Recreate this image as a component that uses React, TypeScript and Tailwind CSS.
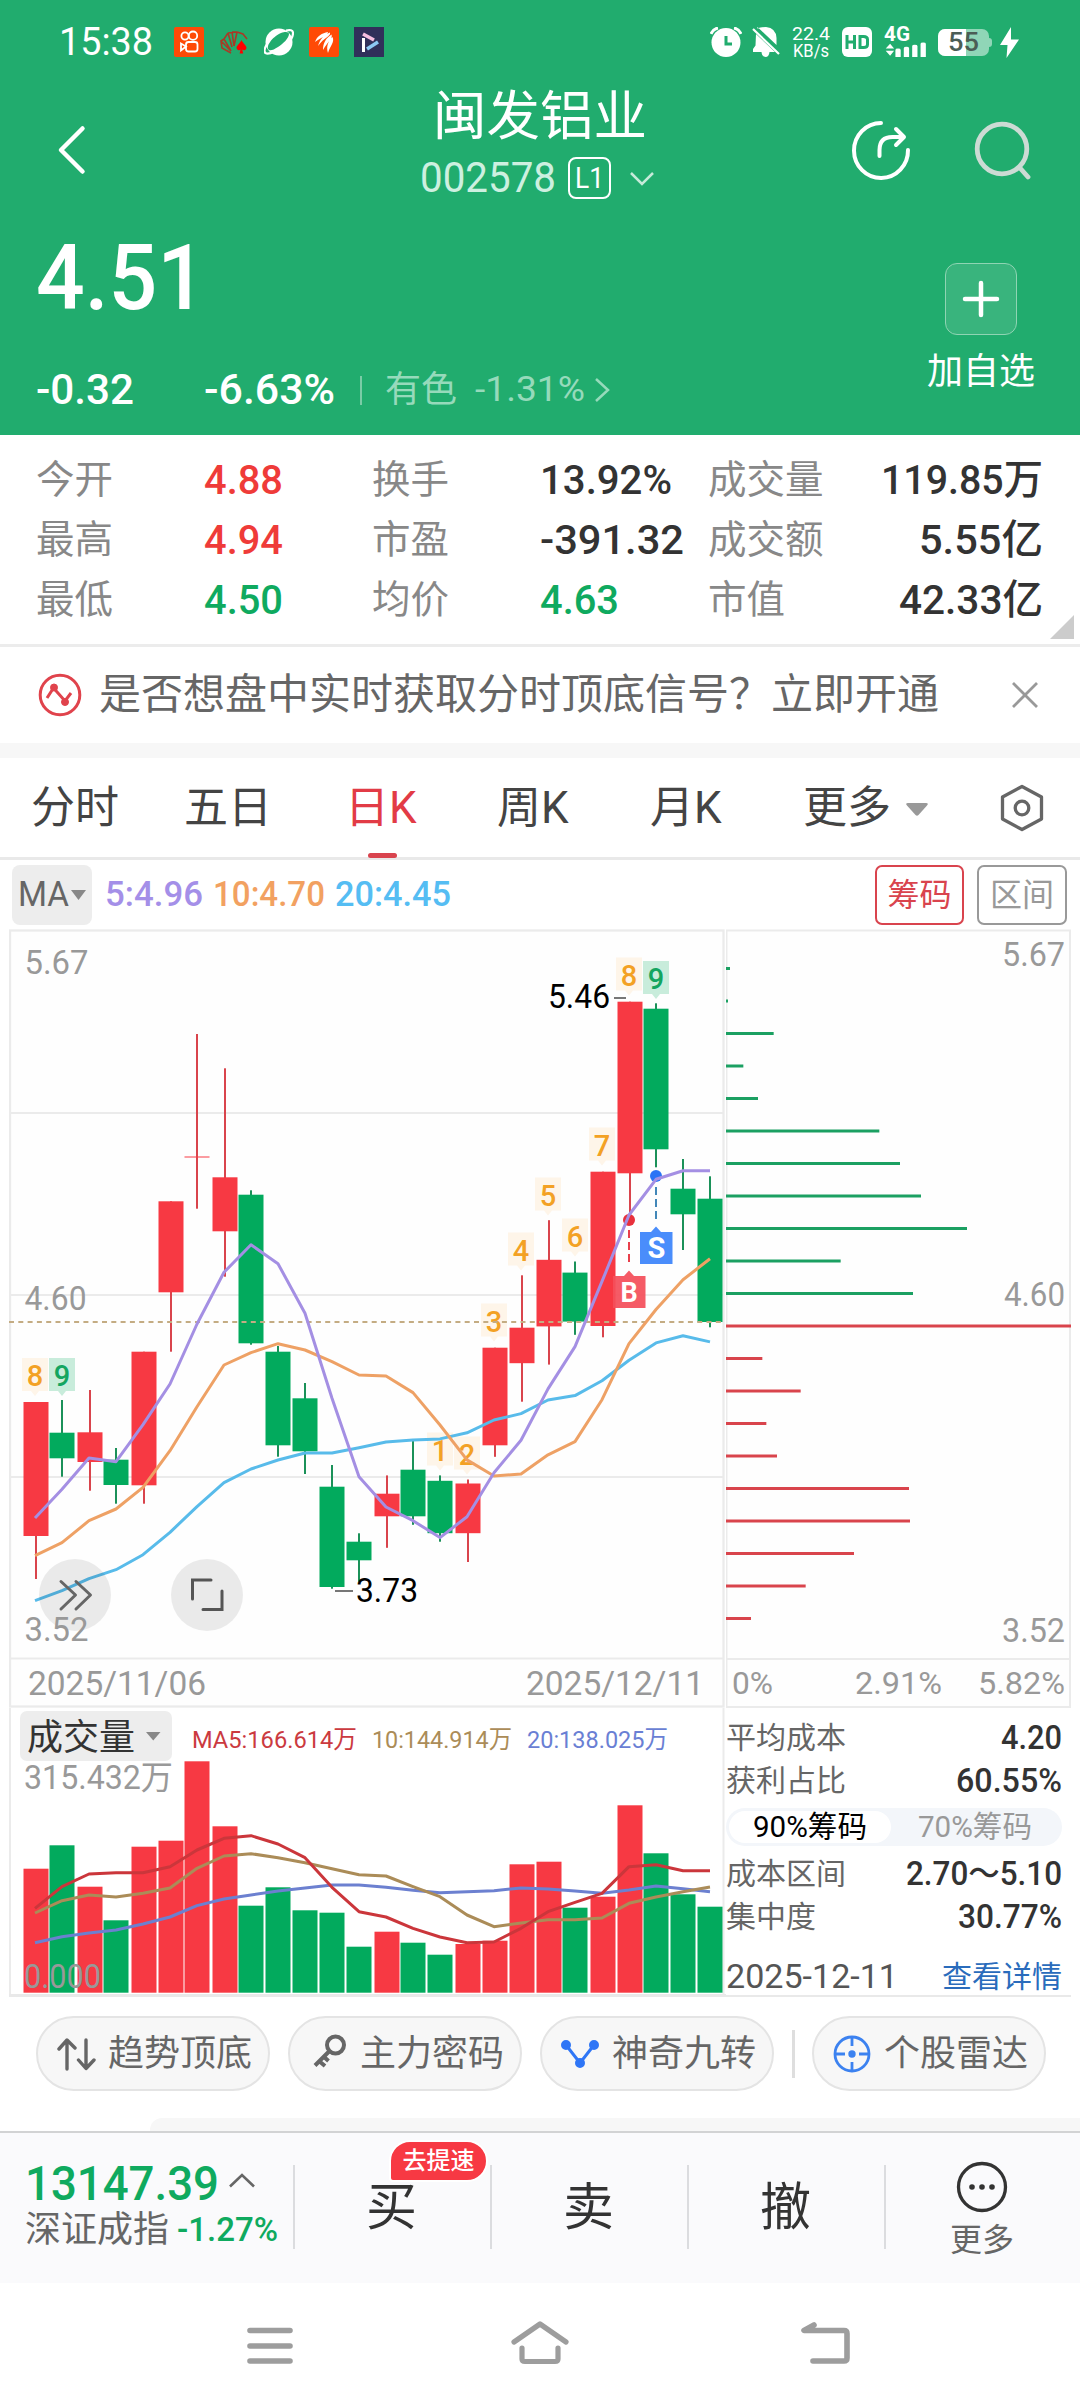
import React, { useLayoutEffect, useRef } from "react";

const RED = "#f73943";
const GREEN = "#02aa5d";

/* Text squeezed or stretched horizontally to an exact width. */
function Fit({ w, className = "", children }: { w: number; className?: string; children: React.ReactNode }) {
  const ref = useRef<HTMLSpanElement>(null);
  useLayoutEffect(() => {
    const el = ref.current;
    if (!el) return;
    el.style.transform = "none";
    el.style.transform = `scaleX(${w / el.getBoundingClientRect().width})`;
  }, [w]);
  return (
    <span className={`inline-flex shrink-0 whitespace-nowrap ${className}`} style={{ width: w }}>
      <span ref={ref} className="inline-block origin-left">
        {children}
      </span>
    </span>
  );
}

function StatusBar() {
  return (
    <div className="flex h-[84px] items-center pl-[59px] pr-[61px] text-white">
      <Fit w={94} className="text-[38px] leading-[84px]">15:38</Fit>
      <div className="ml-[21px] flex items-center gap-[15px]">
        <svg width="30" height="30" viewBox="0 0 30 30" fill="none" stroke="#fff" strokeWidth="1.8">
          <rect width="30" height="30" rx="2" fill="#ff4a06" stroke="none" />
          <circle cx="11" cy="9" r="3.6" />
          <circle cx="19" cy="8.700" r="4.200" />
          <rect x="12" y="15" width="11.5" height="9.500" rx="2.5" />
          <path d="M12 19.500L7 16.500v7z" />
        </svg>
        <svg width="30" height="30" viewBox="0 0 30 30" fill="none" stroke="#a83a26" strokeWidth="1.6">
          <path d="M9 6l9-1M9 6l-4 6 7 12M5 12l-3 2 1 7 9 5M2 14l10 10M9 6l4 14M13 5l2 14M18 5l-3 14M18 5l6 2 4 5M13 5l5 0" />
          <path d="M22.500 13c2 4 5 5.500 5 8a2.500 2.500 0 0 1-4.300 1.500l1 4h-3.600l1-4A2.500 2.500 0 0 1 17.500 21c0-2.500 3-4 5-8z" fill="#f00" stroke="none" />
        </svg>
        <svg width="30" height="30" viewBox="0 0 30 30">
          <circle cx="15" cy="15" r="13.500" fill="#fff" />
          <path d="M5 23C1 20 8 10 17 6c5-2 8-1 8 1 0 4-6 10-11 13-4 2.500-7 4-9 3z" fill="#21ac6e" />
          <path d="M22 3.500c4-1 7-.5 7 2.500 0 4-3 8-5 10M3 17c-3 5-3.500 9-.5 9.500 2.500.5 6-1 8-2" fill="none" stroke="#fff" strokeWidth="2.200" />
        </svg>
        <svg width="30" height="30" viewBox="0 0 30 30" fill="#fff">
          <rect width="30" height="30" rx="2" fill="#ff4a06" />
          <path d="M6 15C8 9 13 6 19 5c0 3-6 5-13 10zM9 19c2-7 6-11 12-13.500 1 4-6 5-12 13.500zM14 23c0-7 3-12 8.500-15.500C24 12 19 14 14 23zM19 26c-2-6 0-12 4.500-16C26 15 21 19 19 26z" />
        </svg>
        <svg width="30" height="30" viewBox="0 0 30 30" fill="none">
          <rect width="30" height="30" fill="#30305a" />
          <path d="M9.500 11v14" stroke="#fff" strokeWidth="3" />
          <path d="M9 7l11 6" stroke="#f6bfe0" strokeWidth="3.500" />
          <path d="M13 22l11-7" stroke="#8cc9f5" strokeWidth="3.500" />
        </svg>
      </div>
      <div className="ml-auto flex items-center">
        <svg width="32" height="30" viewBox="0 0 32 30">
          <circle cx="16" cy="15.500" r="14.500" fill="#fff" />
          <path d="M1 7Q3 2 8 1M31 7Q29 2 24 1" stroke="#fff" strokeWidth="3" fill="none" />
          <path d="M16 9v8h6" stroke="#21ac6e" strokeWidth="3" fill="none" />
        </svg>
        <svg className="ml-[10px]" width="28" height="30" viewBox="0 0 28 30" fill="#fff">
          <path d="M5 1.500Q9 0 14 0q10 1 10.500 11v7L5.500 0zM4 7l19 18h-5.500q-.5 5-4 5t-4-5H1v-3l2.500-3.500z" />
          <path d="M1 2l26 25" stroke="#fff" strokeWidth="2.200" />
        </svg>
        <div className="ml-[12px] flex w-[38px] flex-col items-center text-[18px] leading-[17px]">
          <Fit w={38}>22.4</Fit>
          <Fit w={36}>KB/s</Fit>
        </div>
        <svg className="ml-[12px]" width="30" height="30" viewBox="0 0 30 30" fill="none" stroke="#21ac6e" strokeWidth="3">
          <rect width="30" height="30" rx="6" fill="#fff" stroke="none" />
          <path d="M5 8v14M12.500 8v14M5 15h7.500M18 9.500h3.500q4 0 4 3v5q0 3-4 3H18z" />
        </svg>
        <div className="ml-[11px] flex h-[30px] w-[46px] flex-col justify-between">
          <Fit w={26} className="ml-[1px] text-[20px] font-bold leading-[15px]">4G</Fit>
          <svg width="46" height="17" viewBox="0 0 46 17" fill="#fff">
            <path d="M0 7.500L5 2l4.500 5.500zM0 10l5 5.500L9.500 10z" />
            <path d="M11 9q0-1.500 3-1.500T17 9v8h-6zM20.500 7q0-1.500 3-1.500t3 1.500v10h-6zM30 4.500Q30 3 33 3t3 1.500V17h-6zM39.500 2q0-1.500 3-1.500t3 1.500v15h-6z" />
          </svg>
        </div>
        <div className="relative ml-[9px] flex h-[27px] w-[51px] items-center overflow-hidden rounded-[7px] bg-[#90d6b7]">
          <div className="h-full w-[28px] bg-white" />
          <div className="absolute inset-0 flex items-center justify-center">
            <Fit w={31} className="text-[25px] font-medium leading-[27px] text-[#4b5d55]">55</Fit>
          </div>
        </div>
        <div className="h-[9px] w-[3px] rounded-r bg-[#90d6b7]" />
        <svg className="ml-[8px]" width="19" height="31" viewBox="0 0 19 31" fill="#fff">
          <path d="M11 0L0 18h7.500L6.500 31 19 12.500h-8z" />
        </svg>
      </div>
    </div>
  );
}

function Header() {
  return (
    <header className="h-[435px] bg-[#21ac6e] text-white">
      <StatusBar />
      <div className="flex h-[132px] items-start px-[48px]">
        <svg className="mt-[40px]" width="48" height="52" viewBox="0 0 48 52" fill="none" stroke="#fff" strokeWidth="4.500" strokeLinecap="round" strokeLinejoin="round">
          <path d="M34.500 4.500L13 26l21.500 21.500" />
        </svg>
        <div className="ml-[324px] flex w-[240px] flex-col items-center">
          <h1 className="h-[64px] text-[53.500px] leading-[66px]">闽发铝业</h1>
          <div className="mt-[8px] flex h-[44px] w-[240px] items-center">
            <Fit w={136} className="text-[42px] leading-[44px] text-[#cdf0e0]">002578</Fit>
            <div className="ml-[12px] flex h-[42px] w-[43px] items-center justify-center rounded-[8px] border-2 border-white">
              <Fit w={29} className="text-[29px] leading-[38px]">L1</Fit>
            </div>
            <svg className="ml-[18px]" width="26" height="16" viewBox="0 0 26 16" fill="none" stroke="#c6ead9" strokeWidth="2.500">
              <path d="M2 3l11 11L24 3" />
            </svg>
          </div>
        </div>
        <svg className="ml-[190px] mt-[35px]" width="62" height="62" viewBox="0 0 62 62" fill="none" stroke="#fff" strokeWidth="4" strokeLinecap="round" strokeLinejoin="round">
          <path d="M31 4a27 27.500 0 1 0 27 27" />
          <path d="M29.500 37v-6q0-13 13-13H53M46 10l8 8-8 8" />
        </svg>
        <svg className="ml-[62px] mt-[36px]" width="58" height="60" viewBox="0 0 58 60" fill="none" stroke="#ccdbd4" strokeWidth="4.800" strokeLinecap="round">
          <circle cx="28" cy="29" r="24.800" />
          <path d="M46 48l8 9" />
        </svg>
      </div>
      <div className="flex h-[219px] justify-between pl-[36px] pr-[45px]">
        <div>
          <div className="mt-[13px] h-[98px]">
            <Fit w={170} className="text-[91px] font-medium leading-[98px]">4.51</Fit>
          </div>
          <div className="mt-[40px] flex h-[46px] items-center leading-[46px]">
            <Fit w={98} className="text-[42px] font-medium">-0.32</Fit>
            <Fit w={131} className="ml-[70px] text-[42px] font-medium">-6.63%</Fit>
            <div className="ml-[25px] h-[29px] w-[2px] bg-[#7acca6]" />
            <span className="ml-[23px] text-[36px] text-[#96dabb]">有色</span>
            <Fit w={110} className="ml-[18px] text-[35px] text-[#96dabb]">-1.31%</Fit>
            <svg className="ml-[9px]" width="16" height="26" viewBox="0 0 16 26" fill="none" stroke="#96dabb" strokeWidth="2.500">
              <path d="M2 2l12 11L2 24" />
            </svg>
          </div>
        </div>
        <div className="flex w-[108px] flex-col items-center pt-[47px]">
          <div className="flex size-[72px] items-center justify-center rounded-[12px] border-[1.500px] border-[#8fd4b3] bg-[#39b47d]">
            <svg width="38" height="38" viewBox="0 0 38 38" stroke="#fff" strokeWidth="4.500" strokeLinecap="round">
              <path d="M3 19h32M19 3v32" />
            </svg>
          </div>
          <span className="mt-[13px] whitespace-nowrap text-[36px] leading-[48px]">加自选</span>
        </div>
      </div>
    </header>
  );
}

type Cell = [string, string, number, string];
const quotes: Cell[][] = [
  [["今开", "4.88", 79, "text-[#ef3b39]"], ["换手", "13.92%", 132, "text-[#333]"], ["成交量", "119.85万", 162, "text-[#333]"]],
  [["最高", "4.94", 79, "text-[#ef3b39]"], ["市盈", "-391.32", 144, "text-[#333]"], ["成交额", "5.55亿", 124, "text-[#333]"]],
  [["最低", "4.50", 79, "text-[#0faa5f]"], ["均价", "4.63", 79, "text-[#0faa5f]"], ["市值", "42.33亿", 144, "text-[#333]"]],
];

function Quotes() {
  return (
    <section className="relative flex h-[212px] flex-col border-b-[3px] border-[#ececec] pl-[36px] pr-[37px] pt-[15px]">
      {quotes.map((row, i) => (
        <div key={i} className="flex h-[60px] items-center text-[38.500px] leading-[60px]">
          {row.map(([label, value, w, color], j) => (
            <div key={j} className={j < 2 ? "flex w-[336px]" : "flex flex-1 justify-between"}>
              <span className="w-[168px] shrink-0 text-[#888]">{label}</span>
              <Fit w={w} className={`text-[41px] font-medium ${color}`}>{value}</Fit>
            </div>
          ))}
        </div>
      ))}
      <svg className="absolute bottom-[5px] right-[6px]" width="24" height="24" viewBox="0 0 24 24">
        <path d="M24 0v24H0z" fill="#ccc" />
      </svg>
    </section>
  );
}

function Notice() {
  return (
    <section className="flex h-[96px] items-center pl-[38px] pr-[41px]">
      <svg width="44" height="44" viewBox="0 0 44 44" fill="none" stroke="#e0434c" strokeWidth="3">
        <circle cx="22" cy="22" r="19.800" />
        <path d="M9 25l6.500-10L27 28l6-8" />
        <circle cx="16" cy="14.500" r="3.500" fill="#e0434c" strokeWidth="1" />
        <circle cx="27" cy="29" r="3.500" fill="#e0434c" strokeWidth="1" />
      </svg>
      <span className="ml-[17px] whitespace-nowrap text-[42px] leading-[60px] text-[#666]">是否想盘中实时获取分时顶底信号？立即开通</span>
      <svg className="ml-auto" width="28" height="28" viewBox="0 0 28 28" stroke="#999" strokeWidth="2.800">
        <path d="M2 2l24 24M26 2L2 26" />
      </svg>
    </section>
  );
}

function Tabs() {
  return (
    <nav className="flex h-[102px] items-center border-b-[3px] border-[#e9e9e9] pl-[31px] pr-[36px] text-[44px] leading-[62px] text-[#444]">
      <span className="w-[153px]">分时</span>
      <span className="w-[161px]">五日</span>
      <span className="relative w-[152px] text-[#e23b46]">
        日K
        <span className="absolute left-[23px] top-[76px] h-[5px] w-[29px] rounded-sm bg-[#d9444e]" />
      </span>
      <span className="w-[153px]">周K</span>
      <span className="w-[153px]">月K</span>
      <span>更多</span>
      <svg className="ml-[15px] mt-[4px]" width="22" height="13" viewBox="0 0 22 13" fill="#999">
        <path d="M2 0h18q3 0 1 2.500l-8.500 9.500q-1.500 1.500-3 0L1 2.500Q-1 0 2 0z" />
      </svg>
      <svg className="ml-auto" width="44" height="48" viewBox="0 0 44 48" fill="none" stroke="#666" strokeWidth="3.300" strokeLinejoin="round">
        <path d="M22 2.500l19.500 10.500v22L22 45.500 2.500 35V13z" />
        <circle cx="22" cy="24" r="6.800" />
      </svg>
    </nav>
  );
}

function Indicators() {
  return (
    <div className="flex h-[69px] items-center pl-[12px] pr-[13px] text-[35px] leading-[60px]">
      <div className="flex h-[60px] w-[80px] items-center rounded-[8px] bg-[#ededed] pl-[6px] text-[#666]">
        <Fit w={51}>MA</Fit>
        <svg className="ml-[2px]" width="15" height="10" viewBox="0 0 15 10" fill="#888"><path d="M0 0h15L7.500 10z" /></svg>
      </div>
      <Fit w={98} className="ml-[13px] font-medium text-[#a48fe8]">5:4.96</Fit>
      <Fit w={112} className="ml-[10px] font-medium text-[#f2a161]">10:4.70</Fit>
      <Fit w={116} className="ml-[10px] font-medium text-[#55bdf3]">20:4.45</Fit>
      <div className="ml-auto flex h-[60px] w-[89px] items-center justify-center rounded-[7px] border-[2px] border-[#d9444e] text-[32px] text-[#d9444e]">筹码</div>
      <div className="ml-[13px] flex h-[60px] w-[90px] items-center justify-center rounded-[7px] border-[2px] border-[#999] text-[32px] text-[#999]">区间</div>
    </div>
  );
}

/* centre x, high, body top, body bottom, low, rising, volume bar top */
const candles: [number, number, number, number, number, boolean, number][] = [
  [36, 1402, 1402, 1536, 1579, true, 1868.7],
  [62, 1400, 1432.7, 1458.3, 1476.7, false, 1845.3],
  [90, 1390, 1432.3, 1462, 1490.7, true, 1886.7],
  [116, 1448, 1459.7, 1485, 1503.7, false, 1920.3],
  [144, 1351.7, 1351.7, 1485.3, 1503.7, true, 1846.7],
  [171, 1201.3, 1201.3, 1292.3, 1351.7, true, 1840.7],
  [197, 1034, 1156, 1158, 1208.7, true, 1761.3],
  [225, 1068.3, 1177.3, 1231.3, 1276.7, true, 1826.3],
  [251, 1190.3, 1194.7, 1343.3, 1344.7, false, 1905.7],
  [278, 1346, 1351.7, 1445.3, 1456.7, false, 1887.3],
  [305, 1383, 1398.3, 1451.3, 1474, false, 1910.3],
  [332, 1465, 1486.7, 1587, 1588.7, false, 1912.7],
  [359, 1533.3, 1541.7, 1560.3, 1581.7, false, 1946.7],
  [387, 1475.4, 1493.7, 1516.3, 1547.8, true, 1931.7],
  [413, 1441, 1469.7, 1516.3, 1524.8, false, 1942.7],
  [440, 1475.4, 1480.8, 1533.2, 1541.7, false, 1954.7],
  [468, 1479.5, 1483.5, 1533.2, 1562, true, 1944],
  [495, 1347.7, 1347.7, 1445.3, 1456.8, true, 1940.7],
  [522, 1275.3, 1327.7, 1363.2, 1401.7, true, 1864.3],
  [549, 1220.2, 1259.8, 1326.4, 1364.6, true, 1861.7],
  [575, 1261.5, 1272.6, 1321.6, 1334.8, false, 1907.7],
  [603, 1171.7, 1171.7, 1326, 1337.3, true, 1896.7],
  [630, 1001.7, 1001.7, 1173.3, 1215, true, 1805.3],
  [656, 1003.3, 1008.7, 1149.3, 1167.3, false, 1853.3],
  [683, 1159, 1188.7, 1214.3, 1250, false, 1894.3],
  [710, 1176.3, 1198.7, 1322, 1327.3, false, 1906.7],
];

const ma5 = [1518, 1489.3, 1458, 1461.7, 1424.7, 1384, 1324, 1272.3, 1244.7, 1263.7, 1313.3, 1398.3, 1476.7, 1507, 1520.7, 1537.6, 1516.7, 1472.7, 1440.3, 1388.9, 1346.6, 1281.4, 1215, 1179.3, 1170.7, 1170.7];
const ma10 = [1555.7, 1542.7, 1520.7, 1509, 1487.3, 1450.7, 1406.7, 1365, 1352.7, 1343.7, 1350, 1361.7, 1375, 1376, 1392.6, 1425, 1459.9, 1476, 1474, 1454.8, 1441.6, 1399.7, 1343.6, 1309.5, 1279.7, 1258.8];
const ma20 = [1600.7, 1590.7, 1578.7, 1569.7, 1554.7, 1532.3, 1506.7, 1482.7, 1469, 1460, 1453, 1453, 1447.7, 1442, 1440, 1438.9, 1432.8, 1420, 1413.6, 1400, 1395.6, 1380.8, 1360.2, 1342.9, 1335.8, 1341.9];

const vol5 = [655, 590, 552, 548, 548, 530, 480, 445, 437, 462, 503, 592, 665, 681, 715, 741, 758, 756, 715, 665, 637, 610, 530, 524, 542, 542].map((v) => 1690 + v / 3);
const vol10 = [669, 632, 615, 621, 610, 594, 535, 498, 491, 503, 518, 536, 554, 558, 590, 620, 675, 710, 699, 689, 689, 684, 640, 621, 605, 591].map((v) => 1690 + v / 3);
const vol20 = [758, 740, 729, 720, 702, 681, 647, 627, 615, 603, 594, 585, 585, 592, 601, 608, 605, 602, 594, 597, 603, 610, 600, 588, 596, 605].map((v) => 1690 + v / 3);

const pts = (ys: number[]) => ys.map((y, i) => `${35 + 27 * i},${y}`).join(" ");

/* digit, centre x, box top, green box */
const marks: [string, number, number, boolean][] = [
  ["8", 35, 1358, false],
  ["9", 62, 1358, true],
  ["1", 440, 1432.5, false],
  ["2", 467, 1436.5, false],
  ["3", 494, 1303.5, false],
  ["4", 521, 1232.5, false],
  ["5", 548, 1177.5, false],
  ["6", 575, 1218.5, false],
  ["7", 602, 1127.5, false],
  ["8", 629, 957.5, false],
  ["9", 656, 961, true],
];

function Label({ x, y, w, size = 33, fill = "#999", weight = 500, children }: { x: number; y: number; w: number; size?: number; fill?: string; weight?: number; children: string }) {
  return (
    <text x={x} y={y} textLength={w} lengthAdjust="spacingAndGlyphs" fontSize={size} fontWeight={weight} fill={fill}>
      {children}
    </text>
  );
}

function PriceChart() {
  return (
    <svg className="block" width="717" height="779" viewBox="9 929 717 779" fill="none">
      <rect x="10" y="930.500" width="713.500" height="776" stroke="#ebebeb" strokeWidth="2.300" fill="#fefefe" />
      <path d="M10 1113h713M10 1295h713M10 1477h713M10 1658.500h713" stroke="#ebebeb" strokeWidth="2" />
      <Label x={28} y={1695} w={178} weight={400}>2025/11/06</Label>
      <Label x={526} y={1695} w={178} weight={400}>2025/12/11</Label>
      {candles.map(([x, h, t, b, l, up], i) => (
        <g key={i} fill={up ? RED : GREEN}>
          <rect x={x - 1} y={h} width="2" height={l - h} fill={up ? "#d9444c" : "#1b9159"} />
          <rect x={x - 12.500} y={t} width="25" height={b - t} opacity={b - t < 3 ? 0.5 : 1} />
        </g>
      ))}
      {marks.map(([n, x, y, g], i) => (
        <g key={i}>
          <path d={`M${x - 13} ${y}h26v33h-9l-4 5-4-5h-9z`} fill={g ? "#c8ecdb" : "#fef2e4"} fillOpacity={g ? 1 : 0.8} />
          <text x={x} y={y + 28} fontSize="29" fontWeight="500" textAnchor="middle" fill={g ? "#14a560" : "#f3a124"}>{n}</text>
        </g>
      ))}
      <path d="M9 1322h714" stroke="#c4ac83" strokeWidth="1.800" strokeDasharray="5 4.300" />
      <path d="M630 1230v36" stroke="#e8404c" strokeWidth="2" strokeDasharray="8 4" transform="translate(-1 0)" />
      <path d="M656 1187v36" stroke="#4287b8" strokeWidth="2" strokeDasharray="8 4" />
      <circle cx="629" cy="1220" r="6" fill="#e8303c" />
      <circle cx="656" cy="1176" r="6" fill="#2b73f5" />
      <path d="M613 1276h11l5-5.500 5 5.500h11.500v32H613z" fill="#f44f5a" fillOpacity="0.930" />
      <path d="M640 1232h11l5-5.500 5 5.500h11.500v32H640z" fill="#4a8dfb" />
      <text x="629" y="1302" fontSize="27" fontWeight="700" textAnchor="middle" fill="#fff">B</text>
      <text x="656.500" y="1258" fontSize="29" fontWeight="700" textAnchor="middle" fill="#fff">S</text>
      <g strokeWidth="3" strokeLinejoin="round">
        <polyline points={pts(ma20)} stroke="#58bbea" />
        <polyline points={pts(ma10)} stroke="#eea165" />
        <polyline points={pts(ma5)} stroke="#a48fe3" />
      </g>
      <path d="M614 998h12M335 1591h18" stroke="#777" strokeWidth="2" />
      <Label x={548} y={1008} w={62} fill="#000" weight={450}>5.46</Label>
      <Label x={356} y={1601.500} w={62} fill="#000" weight={450}>3.73</Label>
      <Label x={24.500} y={974} w={64} weight={450}>5.67</Label>
      <Label x={24.500} y={1310} w={62} weight={450}>4.60</Label>
      <circle cx="75" cy="1595" r="36" fill="#000" fillOpacity="0.080" />
      <circle cx="207" cy="1595" r="36" fill="#000" fillOpacity="0.080" />
      <path d="M61 1581.500L75.500 1595 61 1609M76 1581.500L90.500 1595 76 1609" stroke="#666" strokeWidth="3" strokeLinecap="round" strokeLinejoin="round" />
      <path d="M192.500 1599v-19H211M203 1609.500h19V1591" stroke="#555" strokeWidth="3" strokeLinecap="round" />
      <Label x={24.500} y={1640.500} w={64} weight={450}>3.52</Label>
    </svg>
  );
}

function VolumeChart() {
  return (
    <svg className="block" width="717" height="289" viewBox="9 1708 717 289" fill="none">
      <path d="M10 1708v288M723.500 1708v288" stroke="#ebebeb" strokeWidth="2" />
      <path d="M9 1995.500h717" stroke="#e9e9e9" strokeWidth="3" />
      {candles.map(([x, , , , , up, t], i) => (
        <rect key={i} x={x - 12.500} y={t} width="25" height={1992.700 - t} fill={up ? RED : GREEN} />
      ))}
      <g strokeWidth="3" strokeLinejoin="round">
        <polyline points={pts(vol20)} stroke="#6c80d0" />
        <polyline points={pts(vol10)} stroke="#ab8c58" />
        <polyline points={pts(vol5)} stroke="#cb363b" />
      </g>
      <rect x="20" y="1711" width="152" height="50" rx="7" fill="#ededed" />
      <Label x={27} y={1750} w={108} size={36} fill="#333" weight={400}>成交量</Label>
      <path d="M146 1732h14.500l-7.250 8.500z" fill="#888" />
      <Label x={192} y={1748} w={165} size={24.500} fill="#cb3a3f" weight={400}>MA5:166.614万</Label>
      <Label x={372} y={1748} w={140} size={24.500} fill="#ab8c58" weight={400}>10:144.914万</Label>
      <Label x={527} y={1748} w={141} size={24.500} fill="#6a7fd4" weight={400}>20:138.025万</Label>
      <Label x={24} y={1789} w={149} weight={400}>315.432万</Label>
      <Label x={24} y={1988} w={77} weight={450}>0.000</Label>
    </svg>
  );
}

const chips = [12, 6, 143, 52, 96, 460, 522, 585, 723, 344, 561, 1035, 109, 224, 121, 153, 549, 552, 384, 239, 75];

function ChipChart() {
  return (
    <svg className="block" width="345" height="779" viewBox="726 929 345 779" fill="none">
      <rect x="726.500" y="930.500" width="343.500" height="776.500" stroke="#ebebeb" strokeWidth="2" fill="#fefefe" />
      <path d="M726 1659h344" stroke="#ebebeb" strokeWidth="2" />
      {chips.map((w, i) => (
        <rect key={i} x="726" y={967 + 32.500 * i} width={w / 3} height="3" fill={i < 11 ? "#1ba062" : "#d9444c"} />
      ))}
      <Label x={1002} y={966} w={63} weight={450}>5.67</Label>
      <Label x={1004} y={1306} w={61} weight={450}>4.60</Label>
      <Label x={1002} y={1641.500} w={63} weight={450}>3.52</Label>
      <Label x={732} y={1693.500} w={41} size={32} weight={400}>0%</Label>
      <Label x={855} y={1693.500} w={87} size={32} weight={400}>2.91%</Label>
      <Label x={978} y={1693.500} w={87} size={32} weight={400}>5.82%</Label>
    </svg>
  );
}

function StatRow({ label, value, w }: { label: string; value: string; w: number }) {
  return (
    <div className="flex h-[43px] items-center justify-between leading-[43px]">
      <span className="text-[30px] text-[#666]">{label}</span>
      <Fit w={w} className="text-[33px] font-medium text-[#333]">{value}</Fit>
    </div>
  );
}

function ChipStats() {
  return (
    <div className="flex h-[289px] flex-col border-b-2 border-[#e9e9e9] pr-[9px] pt-[8px]">
      <StatRow label="平均成本" value="4.20" w={61} />
      <StatRow label="获利占比" value="60.55%" w={106} />
      <div className="my-[6px] flex h-[38px] shrink-0 items-center rounded-full bg-[#f3f6fa] p-[3px] text-[30px] leading-[32px]">
        <div className="flex h-[32px] w-[162px] items-center justify-center rounded-full bg-white text-black">
          <Fit w={114}>90%筹码</Fit>
        </div>
        <div className="flex flex-1 items-center justify-center text-[#999]">
          <Fit w={114}>70%筹码</Fit>
        </div>
      </div>
      <StatRow label="成本区间" value="2.70～5.10" w={156} />
      <StatRow label="集中度" value="30.77%" w={104} />
      <div className="mt-[17px] flex h-[43px] items-center justify-between leading-[43px]">
        <Fit w={172} className="text-[33px] text-[#555]">2025-12-11</Fit>
        <span className="text-[30px] text-[#2a6cbc]">查看详情</span>
      </div>
    </div>
  );
}

function Pill({ icon, label }: { icon: React.ReactNode; label: string }) {
  return (
    <div className="flex h-[75px] w-[234px] shrink-0 items-center rounded-full border-2 border-[#e4e4e4] bg-[#f7f7f7] pl-[17px]">
      {icon}
      <span className="ml-[12px] whitespace-nowrap text-[36px] leading-[62px] text-[#666]">{label}</span>
    </div>
  );
}

function Tools() {
  return (
    <section className="flex h-[121px] items-start pl-[36px] pt-[19px]">
      <Pill
        label="趋势顶底"
        icon={
          <svg width="41" height="36" viewBox="0 0 41 36" fill="none" stroke="#666" strokeWidth="3.400" strokeLinecap="round" strokeLinejoin="round">
            <path d="M12 33V5M4 13l8-9 8 8M31 4v28M23.500 24l7.500 8.500 8-8.500" />
          </svg>
        }
      />
      <div className="ml-[18px]">
        <Pill
          label="主力密码"
          icon={
            <svg className="mb-[5px]" width="41" height="40" viewBox="0 0 41 40" fill="none" stroke="#666" strokeWidth="4">
              <circle cx="28.500" cy="14" r="8.500" />
              <path d="M22 20.500L8 34.500M12 30l6 5M16.500 25.500l5 4.500" />
            </svg>
          }
        />
      </div>
      <div className="ml-[18px]">
        <Pill
          label="神奇九转"
          icon={
            <svg width="41" height="34" viewBox="0 0 41 34" fill="#2f76f6" stroke="#2f76f6" strokeWidth="3">
              <path d="M7 8l14 18L35 8" fill="none" />
              <circle cx="7" cy="8" r="3.500" />
              <circle cx="35" cy="8" r="3.500" />
              <circle cx="21" cy="26" r="3.500" />
            </svg>
          }
        />
      </div>
      <div className="ml-[18px] mt-[14px] h-[48px] w-[3px] bg-[#dedede]" />
      <div className="ml-[17px]">
        <Pill
          label="个股雷达"
          icon={
            <svg width="41" height="38" viewBox="0 0 41 38" fill="none" stroke="#3c82f0" strokeWidth="2.800">
              <circle cx="21" cy="19" r="17" />
              <path d="M21 2v9M21 27v9M4 19h10M28 19h10" />
              <circle cx="21" cy="19" r="2.300" fill="#3c82f0" />
            </svg>
          }
        />
      </div>
    </section>
  );
}

function TradeBar() {
  return (
    <section className="flex h-[152px] border-t-2 border-[#d2d3d4] bg-[#fafafc]">
      <div className="w-[293px] pl-[25px] pt-[26px]">
        <div className="flex h-[50px] items-center leading-[50px]">
          <Fit w={194} className="text-[49px] font-medium text-[#0faa5f]">13147.39</Fit>
          <svg className="mb-[8px] ml-[9px]" width="28" height="16" viewBox="0 0 28 16" fill="none" stroke="#666" strokeWidth="2.600">
            <path d="M2 14.500L14 3l12 11.500" />
          </svg>
        </div>
        <div className="flex h-[42px] items-center leading-[42px]">
          <span className="text-[36px] text-[#666]">深证成指</span>
          <Fit w={101} className="ml-[8px] text-[33px] font-medium text-[#0faa5f]">-1.27%</Fit>
        </div>
      </div>
      {["买", "卖", "撤"].map((t, i) => (
        <div key={t} className="relative flex h-[146px] w-[197px] items-center justify-center pt-[3px] text-[51px] leading-[60px] text-[#333]">
          <span className="absolute left-0 top-[32px] h-[84px] w-[2px] bg-[#dbdcdf]" />
          {t}
          {i === 0 && (
            <span className="absolute left-[96px] top-[7px] flex h-[42px] w-[99px] items-center justify-center rounded-[21px] rounded-bl-[4px] border-2 border-white bg-[#f73943] text-[24px] font-medium leading-[38px] text-white">
              去提速
            </span>
          )}
        </div>
      ))}
      <div className="relative flex flex-1 flex-col items-center pt-[28px]">
        <span className="absolute left-0 top-[32px] h-[84px] w-[2px] bg-[#dbdcdf]" />
        <svg width="52" height="52" viewBox="0 0 52 52" fill="#333">
          <circle cx="26" cy="26" r="23.500" fill="none" stroke="#333" strokeWidth="3.300" />
          <circle cx="16" cy="26" r="2.800" />
          <circle cx="26" cy="26" r="2.800" />
          <circle cx="36" cy="26" r="2.800" />
        </svg>
        <span className="mt-[7px] text-[32px] leading-[40px] text-[#666]">更多</span>
      </div>
    </section>
  );
}

function SystemNav() {
  return (
    <div className="flex h-[125px] items-start bg-white pl-[247px] pt-[36px]">
      <svg width="46" height="46" viewBox="0 0 46 46" stroke="#9d9d9d" strokeWidth="5.600" strokeLinecap="round">
        <path d="M3 11.500h40M3 27h40M3 42h40" />
      </svg>
      <svg className="ml-[218px]" width="58" height="48" viewBox="0 0 58 48" fill="none" stroke="#9d9d9d" strokeWidth="5.200" strokeLinecap="round" strokeLinejoin="round">
        <path d="M3 23L29 5l26 18" />
        <path d="M11 29v11q0 2.500 3 2.500h30q3 0 3-2.500V29" />
      </svg>
      <svg className="ml-[232px]" width="50" height="48" viewBox="0 0 50 48" fill="none" stroke="#9d9d9d" strokeWidth="5.600" strokeLinecap="round" strokeLinejoin="round">
        <path d="M13 6L3 11.500h40q3 0 3 3V39q0 3-3 3H12" />
      </svg>
    </div>
  );
}

export default function App() {
  return (
    <div className="h-[2408px] w-[1080px] overflow-hidden bg-white font-['Roboto','Noto_Sans_CJK_SC',sans-serif]">
      <Header />
      <Quotes />
      <Notice />
      <div className="h-[15px] bg-[#f7f7f7]" />
      <Tabs />
      <Indicators />
      <section className="flex pl-[9px]">
        <div>
          <PriceChart />
          <VolumeChart />
        </div>
        <div className="w-[345px]">
          <ChipChart />
          <ChipStats />
        </div>
      </section>
      <Tools />
      <div className="ml-[150px] h-[13px] rounded-tl-[12px] bg-[#f7f7f7]" />
      <TradeBar />
      <SystemNav />
    </div>
  );
}
